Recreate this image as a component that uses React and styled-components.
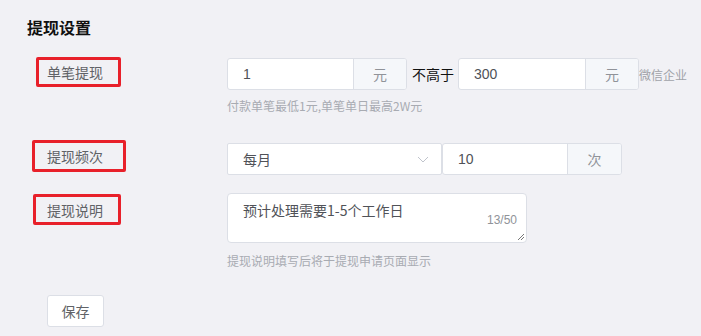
import styled, { createGlobalStyle } from 'styled-components'

const Global = createGlobalStyle`
  * { box-sizing: border-box; }
  body {
    margin: 0;
    background: #f1f1f5;
    font-family: "Noto Sans CJK SC", "Noto Sans", sans-serif;
  }
`

const Page = styled.div`
  width: 701px;
  height: 336px;
  padding: 16px 0 0 27px;
  overflow: hidden;
`
const Title = styled.h2`
  margin: 0 0 20px;
  font-size: 16px;
  line-height: 22px;
  font-weight: 700;
  color: #111;
`
const Form = styled.div`
  padding-left: 20px;
  display: flex;
  flex-direction: column;
`
const Row = styled.div`
  display: flex;
  align-items: flex-start;
  margin-bottom: ${p => p.$gap || 0}px;
`
const LabelCol = styled.div`
  width: 180px;
  flex: none;
`
const Label = styled.span`
  display: inline-flex;
  align-items: center;
  margin-left: -${p => p.$left}px;
  margin-top: ${p => p.$top}px;
  padding: 0 ${p => p.$right}px 0 ${p => p.$left - 3}px;
  height: ${p => p.$h}px;
  border: 3px solid #e8202a;
  border-radius: 2px;
  font-size: 14px;
  color: #606266;
`
const Field = styled.div`
  display: flex;
  flex-direction: column;
`
const Line = styled.div`
  display: flex;
  align-items: center;
`
const Group = styled.div`
  display: flex;
  height: 32px;
  border: 1px solid #dcdfe6;
  border-radius: 3px;
  background: #fff;
  overflow: hidden;
`
const Input = styled.div`
  width: ${p => p.$w}px;
  padding-left: 15px;
  display: flex;
  align-items: center;
  font-size: 14px;
  color: #505258;
  font-family: "Liberation Sans", "Noto Sans CJK SC", sans-serif;
`
const Suffix = styled.div`
  width: ${p => p.$w}px;
  border-left: 1px solid #dcdfe6;
  background: #f5f7fa;
  display: flex;
  align-items: center;
  justify-content: center;
  font-size: 14px;
  color: #909399;
`
const Between = styled.span`
  margin: 0 4px 0 5px;
  font-size: 14px;
  color: #111;
`
const Side = styled.span`
  font-size: 12px;
  color: #a0a2a8;
`
const Help = styled.div`
  margin-top: ${p => p.$top}px;
  font-size: 12px;
  line-height: 18px;
  color: #a8abb2;
`
const Select = styled.div`
  width: 215px;
  height: 32px;
  border: 1px solid #dcdfe6;
  border-radius: 2px;
  background: #fff;
  padding: 0 12px 0 15px;
  display: flex;
  align-items: center;
  justify-content: space-between;
  font-size: 14px;
  color: #505258;
`
const Area = styled.div`
  position: relative;
  width: 300px;
  height: 50px;
  border: 1px solid #dcdfe6;
  border-radius: 4px;
  background: #fff;
  padding: 6px 15px;
  font-size: 14px;
  line-height: 20px;
  color: #505258;
`
const Count = styled.span`
  position: absolute;
  right: 9px;
  bottom: 12px;
  font-size: 12px;
  color: #909399;
  font-family: "Liberation Sans", sans-serif;
`
const Grip = styled.svg`
  position: absolute;
  right: 1px;
  bottom: 1px;
`
const SaveButton = styled.button`
  width: 57px;
  height: 32px;
  margin-top: 25px;
  border: 1px solid #dcdfe6;
  border-radius: 3px;
  background: #fff;
  font-family: inherit;
  font-size: 14px;
  color: #606266;
  padding: 0;
`

export default function App() {
  return (
    <Page>
      <Global />
      <Title>提现设置</Title>
      <Form>
        <Row $gap={28}>
          <LabelCol>
            <Label $left={11} $right={15} $h={30} $top={-1}>单笔提现</Label>
          </LabelCol>
          <Field>
            <Line>
              <Group>
                <Input $w={125}>1</Input>
                <Suffix $w={53}>元</Suffix>
              </Group>
              <Between>不高于</Between>
              <Group>
                <Input $w={126}>300</Input>
                <Suffix $w={53}>元</Suffix>
              </Group>
              <Side>微信企业</Side>
            </Line>
            <Help $top={7}>付款单笔最低1元,单笔单日最高2W元</Help>
          </Field>
        </Row>
        <Row $gap={18}>
          <LabelCol>
            <Label $left={15} $right={20} $h={32} $top={-4}>提现频次</Label>
          </LabelCol>
          <Line>
            <Select>
              <span>每月</span>
              <svg width="12" height="7" viewBox="0 0 12 7">
                <path d="M1 1l5 5 5-5" fill="none" stroke="#c0c4cc" strokeWidth="1" />
              </svg>
            </Select>
            <Group>
              <Input $w={124}>10</Input>
              <Suffix $w={54}>次</Suffix>
            </Group>
          </Line>
        </Row>
        <Row>
          <LabelCol>
            <Label $left={14} $right={15} $h={31} $top={1}>提现说明</Label>
          </LabelCol>
          <Field>
            <Area>
              预计处理需要1-5个工作日
              <Count>13/50</Count>
              <Grip width="9" height="9" viewBox="0 0 9 9">
                <path d="M8 2L2 8M8 5L5 8" stroke="#777" strokeWidth="1" />
              </Grip>
            </Area>
            <Help $top={9}>提现说明填写后将于提现申请页面显示</Help>
          </Field>
        </Row>
        <div>
          <SaveButton>保存</SaveButton>
        </div>
      </Form>
    </Page>
  )
}
